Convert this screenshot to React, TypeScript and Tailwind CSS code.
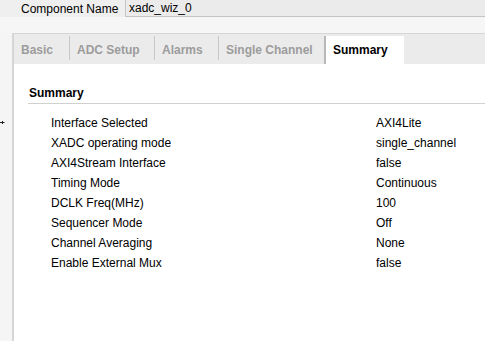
import React from "react";

const tabs: [string, string][] = [
  ["Basic", "w-[55px]"],
  ["ADC Setup", "w-[84px]"],
  ["Alarms", "w-[63px]"],
  ["Single Channel", "w-[105px]"],
];

const rows: [string, string][] = [
  ["Interface Selected", "AXI4Lite"],
  ["XADC operating mode", "single_channel"],
  ["AXI4Stream Interface", "false"],
  ["Timing Mode", "Continuous"],
  ["DCLK Freq(MHz)", "100"],
  ["Sequencer Mode", "Off"],
  ["Channel Averaging", "None"],
  ["Enable External Mux", "false"],
];

export default function App() {
  return (
    <div
      className="w-[485px] h-[341px] overflow-hidden bg-[#f5f5f5] text-[12px] text-black flex flex-col"
      style={{ fontFamily: '"Liberation Sans", Arial, sans-serif' }}
    >
      {/* component name */}
      <div className="flex h-[17px] shrink-0 bg-[#efefef]">
        <div className="w-[125px] pl-[21px] leading-[14px] flex items-center">Component Name</div>
        <div className="flex-1 border-l border-b border-[#c4c4c4] bg-[#ebebeb] pl-[3px] flex items-center leading-[14px]">
          xadc_wiz_0
        </div>
      </div>
      <div className="h-[16px] shrink-0 bg-[#f6f6f6]" />

      <div className="flex flex-1">
        {/* left gutter with marker */}
        <div className="w-[12px] pt-[87px]">
          <svg width="5" height="5" viewBox="0 0 5 5">
            <path d="M0 2.5H4.5M2.5 1V4" stroke="#222" strokeWidth="1" fill="none" />
          </svg>
        </div>

        <div className="flex-1 flex flex-col border-l-2 border-t border-[#d6d6d6]">
          {/* tab bar */}
          <div className="h-[30px] shrink-0 bg-[#ebebeb] flex items-start pt-[2px]">
            {tabs.map(([t, w]) => (
              <React.Fragment key={t}>
                <div className={`${w} h-[28px] flex items-center pl-[7px] font-bold text-[#9c9c9c] whitespace-nowrap`}>{t}</div>
                <div className="w-px h-[24px] bg-[#c8c8c8]" />
              </React.Fragment>
            ))}
            <div className="w-[80px] h-[28px] flex items-center pl-[7px] font-bold bg-white border-l-2 border-[#b8b8b8] ml-[-1px]">
              Summary
            </div>
          </div>

          {/* content */}
          <div className="flex-1 bg-white">
            <div className="mt-[22px] ml-[14px] pl-[1px] pb-[3px] leading-[14px] font-bold border-b border-[#d0d0d0]">
              Summary
            </div>
            <div className="mt-[9px] pl-[37px]">
              {rows.map(([k, v]) => (
                <div key={k} className="flex h-[20px] items-center">
                  <div className="w-[325px]">{k}</div>
                  <div>{v}</div>
                </div>
              ))}
            </div>
          </div>
        </div>
      </div>
    </div>
  );
}
